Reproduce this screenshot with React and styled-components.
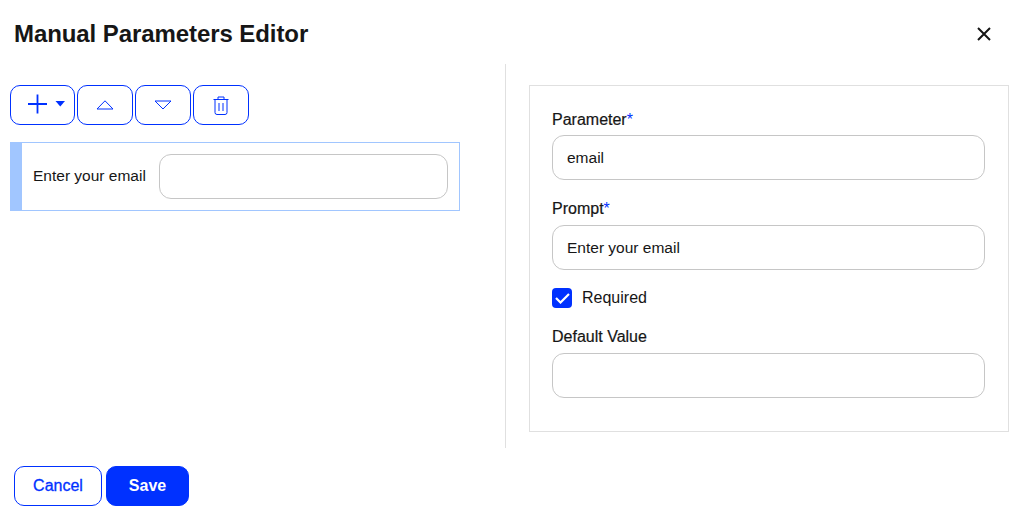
import React from "react";
import styled, { createGlobalStyle } from "styled-components";

const Blue = "#0031ff";
const LightBlue = "#a1c6ff";
const Ink = "#161616";
const Line = "#c6c6c6";
const Pale = "#e0e0e0";
const Font = `"Liberation Sans", Arial, sans-serif`;

const Global = createGlobalStyle`
  html, body { margin: 0; padding: 0; background: #fff; }
  body { font-family: ${Font}; color: ${Ink}; }
  * { box-sizing: border-box; }
`;

const Dialog = styled.div`
  width: 1022px;
  height: 518px;
  display: flex;
  flex-direction: column;
  overflow: hidden;
`;

const Header = styled.header`
  height: 64px;
  padding: 3px 22px 0 14px;
  display: flex;
  align-items: center;
  justify-content: space-between;
`;

const Title = styled.h1`
  margin: 0;
  font-size: 24px;
  font-weight: 700;
  letter-spacing: -0.08px;
`;

const Close = styled.button`
  width: 32px;
  height: 32px;
  padding: 0;
  border: 0;
  background: none;
  color: ${Ink};
  display: flex;
  align-items: center;
  justify-content: center;
`;

const Body = styled.div`
  height: 384px;
  display: flex;
`;

const LeftPane = styled.section`
  width: 506px;
  padding: 21px 45px 0 10px;
  border-right: 1px solid ${Pale};
`;

const Toolbar = styled.div`
  display: flex;
  gap: 2px;
  margin-bottom: 17px;
`;

const ToolButton = styled.button`
  width: ${(p) => p.$width || 56}px;
  height: 40px;
  padding: 0 0 0 ${(p) => p.$inset || 0}px;
  background: #fff;
  border: 1px solid ${Blue};
  border-radius: 10px;
  color: ${Blue};
  display: flex;
  align-items: center;
  justify-content: center;
`;

const ParamRow = styled.div`
  height: 69px;
  border: 1px solid ${LightBlue};
  border-left: 12px solid ${LightBlue};
  padding: 0 11px;
  display: flex;
  align-items: center;
  gap: 13px;
`;

const RowLabel = styled.span`
  width: 113px;
  padding-bottom: 2px;
  font-size: 15.5px;
  white-space: nowrap;
`;

const TextInput = styled.input`
  display: block;
  flex: 1;
  width: 100%;
  min-width: 0;
  height: 45px;
  padding: 0 14px;
  border: 1px solid ${Line};
  border-radius: 12px;
  background: #fff;
  color: ${Ink};
  font: 400 15.5px ${Font};
  outline: none;
`;

const RightPane = styled.section`
  flex: 1;
  padding: 21px 13px 0 23px;
`;

const Panel = styled.div`
  height: 347px;
  border: 1px solid ${Pale};
  padding: 25px 23px 0 22px;
`;

const Field = styled.div`
  margin-bottom: ${(p) => p.$gap ?? 0}px;
`;

const FieldLabel = styled.label`
  display: block;
  height: 18px;
  margin-bottom: ${(p) => p.$gap ?? 7}px;
  line-height: 18px;
  font-size: 16px;
  -webkit-text-stroke: 0.2px ${Ink};
`;

const Star = styled.span`
  color: ${Blue};
  -webkit-text-stroke: 0;
`;

const CheckRow = styled.div`
  height: 20px;
  margin: 18px 0 20px;
  display: flex;
  align-items: center;
  gap: 10px;
  font-size: 16px;
`;

const CheckBox = styled.span`
  width: 20px;
  height: 20px;
  border-radius: 4px;
  background: ${Blue};
  display: flex;
  align-items: center;
  justify-content: center;
`;

const Footer = styled.footer`
  padding: 18px 0 0 14px;
  display: flex;
  gap: 4px;
`;

const FooterButton = styled.button`
  width: ${(p) => p.$width}px;
  height: 40px;
  padding: 0;
  border: 1px solid ${Blue};
  border-radius: 10px;
  background: ${(p) => (p.$primary ? Blue : "#fff")};
  color: ${(p) => (p.$primary ? "#fff" : Blue)};
  font: ${(p) => (p.$primary ? 700 : 400)} 16px ${Font};
  -webkit-text-stroke: ${(p) => (p.$primary ? 0 : "0.3px")};
`;

const App = () => (
  <Dialog>
    <Global />
    <Header>
      <Title>Manual Parameters Editor</Title>
      <Close aria-label="Close">
        <svg width="16" height="16" viewBox="0 0 16 16" fill="none" stroke="currentColor" strokeWidth="2">
          <path d="M2 2l12 12M14 2L2 14" />
        </svg>
      </Close>
    </Header>
    <Body>
      <LeftPane>
        <Toolbar>
          <ToolButton $width={65} $inset={8} aria-label="Add">
            <svg width="37" height="20" viewBox="0 0 37 20" fill="none" style={{ marginTop: -2 }}>
              <path d="M9.5 .5v19M0 10h19" stroke="currentColor" strokeWidth="1.8" />
              <path d="M27.5 7h9.5l-4.75 5.5z" fill="currentColor" />
            </svg>
          </ToolButton>
          <ToolButton aria-label="Move up">
            <svg width="18" height="10" viewBox="0 0 18 10" fill="none" stroke="currentColor" strokeWidth="1">
              <path d="M9 .8L17 9H1z" />
            </svg>
          </ToolButton>
          <ToolButton aria-label="Move down">
            <svg width="18" height="10" viewBox="0 0 18 10" fill="none" stroke="currentColor" strokeWidth="1">
              <path d="M1 1h16L9 9z" />
            </svg>
          </ToolButton>
          <ToolButton aria-label="Delete">
            <svg width="16" height="19" viewBox="0 0 16 19" fill="none" stroke="currentColor" strokeWidth="1">
              <path d="M.5 3.5h15M5 3.5V1h6v2.5M2 3.5v13a2 2 0 0 0 2 2h8a2 2 0 0 0 2-2v-13M6 7v8M10 7v8" />
            </svg>
          </ToolButton>
        </Toolbar>
        <ParamRow>
          <RowLabel>Enter your email</RowLabel>
          <TextInput />
        </ParamRow>
      </LeftPane>
      <RightPane>
        <Panel>
          <Field $gap={20}>
            <FieldLabel $gap={6}>Parameter<Star>*</Star></FieldLabel>
            <TextInput defaultValue="email" />
          </Field>
          <Field>
            <FieldLabel>Prompt<Star>*</Star></FieldLabel>
            <TextInput defaultValue="Enter your email" />
          </Field>
          <CheckRow>
            <CheckBox>
              <svg width="15" height="12" viewBox="0 0 15 12" fill="none" stroke="#fff" strokeWidth="2.2">
                <path d="M1 6l4.5 4.5L14 2" />
              </svg>
            </CheckBox>
            Required
          </CheckRow>
          <Field>
            <FieldLabel>Default Value</FieldLabel>
            <TextInput />
          </Field>
        </Panel>
      </RightPane>
    </Body>
    <Footer>
      <FooterButton $width={88}>Cancel</FooterButton>
      <FooterButton $width={83} $primary>Save</FooterButton>
    </Footer>
  </Dialog>
);

export default App;
